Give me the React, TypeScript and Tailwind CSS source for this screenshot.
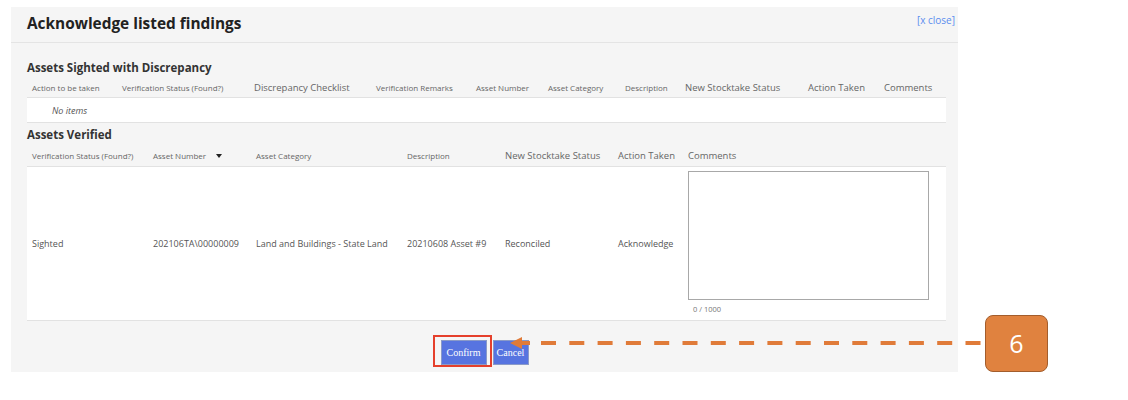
const font = { fontFamily: '"Open Sans", "Noto Sans", sans-serif' };

const sightedCols = [
  { label: "Action to be taken", big: false },
  { label: "Verification Status (Found?)", big: false },
  { label: "Discrepancy Checklist", big: true },
  { label: "Verification Remarks", big: false },
  { label: "Asset Number", big: false },
  { label: "Asset Category", big: false },
  { label: "Description", big: false },
  { label: "New Stocktake Status", big: true },
  { label: "Action Taken", big: true },
  { label: "Comments", big: true },
];

const verifiedCols = [
  { label: "Verification Status (Found?)", big: false },
  { label: "Asset Number", big: false, sort: true },
  { label: "Asset Category", big: false },
  { label: "Description", big: false },
  { label: "New Stocktake Status", big: true },
  { label: "Action Taken", big: true },
  { label: "Comments", big: true },
];

const verifiedRow = [
  "Sighted",
  "202106TA\\00000009",
  "Land and Buildings - State Land",
  "20210608 Asset #9",
  "Reconciled",
  "Acknowledge",
];

function HeadCell({ label, big, sort }: { label: string; big: boolean; sort?: boolean }) {
  return (
    <div
      className={
        "pl-[5px] flex items-center gap-[10px] whitespace-nowrap text-[#666] " +
        (big ? "text-[9.5px]" : "text-[8px]")
      }
    >
      {label}
      {sort && (
        <svg width="6" height="4" viewBox="0 0 6 4">
          <path d="M0 0h6L3 4z" fill="#222" />
        </svg>
      )}
    </div>
  );
}

export default function App() {
  return (
    <div className="relative w-[1128px] h-[400px] bg-white" style={font}>
      <div className="pl-[11px] pt-[7px]">
        <div className="w-[947px] h-[365px] bg-[#f5f5f5] flex flex-col">
          {/* header */}
          <div className="h-[36px] flex justify-between border-b border-[#e4e4e4] pl-4 pr-[3px]">
            <h1 className="pt-[7px] text-[15.4px] leading-[20px] font-bold text-[#222]">
              Acknowledge listed findings
            </h1>
            <a className="pt-[6px] text-[10px] leading-[14px] text-[#5b8def]">[x close]</a>
          </div>

          <div className="pl-4 pr-3">
            {/* Assets Sighted with Discrepancy */}
            <h2 className="mt-[18px] h-[14px] text-[11.5px] leading-[14px] font-bold text-[#333]">
              Assets Sighted with Discrepancy
            </h2>
            <div className="mt-[4px] h-[19px] grid grid-cols-[90px_132px_122px_100px_72px_77px_60px_123px_76px_1fr] border-b border-[#e2e2e2]">
              {sightedCols.map((c) => (
                <HeadCell key={c.label} label={c.label} big={c.big} />
              ))}
            </div>
            <div className="h-[25px] bg-white border-b border-[#e2e2e2] pl-[25px] pt-[2px] flex items-center">
              <span className="italic text-[9px] text-[#555]">No items</span>
            </div>

            {/* Assets Verified */}
            <h2 className="mt-[5px] h-[14px] text-[11.5px] leading-[14px] font-bold text-[#333]">
              Assets Verified
            </h2>
            <div className="mt-[4px] h-[21px] grid grid-cols-[121px_103px_151px_98px_113px_70px_1fr] border-b border-[#e2e2e2]">
              {verifiedCols.map((c) => (
                <HeadCell key={c.label} label={c.label} big={c.big} sort={c.sort} />
              ))}
            </div>
            <div className="h-[154px] bg-white border-b border-[#e2e2e2] grid grid-cols-[121px_103px_151px_98px_113px_70px_1fr]">
              {verifiedRow.map((v) => (
                <div key={v} className="pl-[5px] flex items-center whitespace-nowrap text-[9px] text-[#555]">
                  {v}
                </div>
              ))}
              <div className="pl-[5px] pt-[4px] flex flex-col">
                <textarea className="w-[241px] h-[129px] border border-[#a8a8a8] bg-white resize-none outline-none" />
                <span className="mt-[4px] pl-[5px] text-[7.5px] leading-[10px] text-[#777]">0 / 1000</span>
              </div>
            </div>
          </div>

          {/* footer buttons */}
          <div className="mt-[19px] flex justify-center gap-[6px]">
            <button
              className="w-[46px] h-[25px] bg-[#5774e0] border border-[#8a9ac8] text-white text-[10px]"
              style={{ fontFamily: '"Liberation Serif", serif' }}
            >
              Confirm
            </button>
            <button
              className="w-[36px] h-[25px] bg-[#5774e0] border border-[#8a9ac8] text-white text-[10px]"
              style={{ fontFamily: '"Liberation Serif", serif' }}
            >
              Cancel
            </button>
          </div>
        </div>
      </div>

      {/* annotation: highlight, arrow, step badge */}
      <div className="absolute left-[433px] top-[335px] w-[59px] h-[32px] border-2 border-[#e5402c]" />
      <svg className="absolute left-[508px] top-[334px]" width="478" height="18" viewBox="0 0 478 18">
        <path d="M2 9L14 3v12z" fill="#e07b39" />
        <path d="M13 9h9" stroke="#e07b39" strokeWidth="4" />
        <path d="M33 9H477" stroke="#e07b39" strokeWidth="4" strokeDasharray="15 13.3" />
      </svg>
      <div className="absolute left-[985px] top-[315px] w-[63px] h-[57px] rounded-[8px] bg-[#e0823f] border border-[#a35d2c] flex items-center justify-center text-white text-[25px]">
        6
      </div>
    </div>
  );
}
